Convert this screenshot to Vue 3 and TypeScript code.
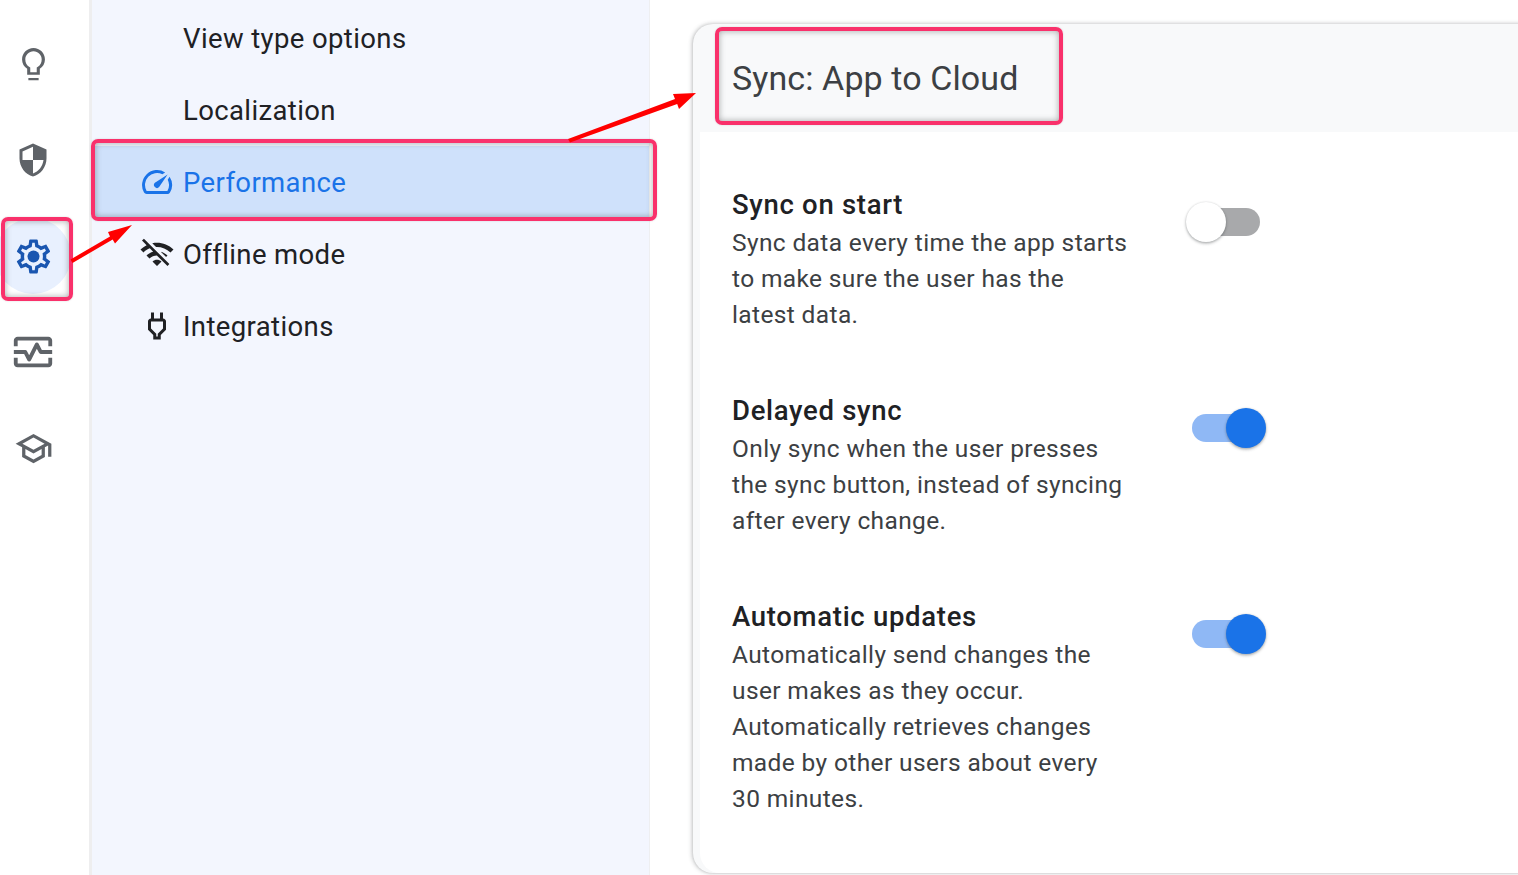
<script setup lang="ts">
interface NavItem { label: string; icon?: string; active?: boolean }
const nav: NavItem[] = [
  { label: 'View type options' },
  { label: 'Localization' },
  { label: 'Performance', active: true, icon: 'M20.38 8.57l-1.23 1.85a8 8 0 0 1-.22 7.58H5.07A8 8 0 0 1 15.58 6.85l1.85-1.23A10 10 0 0 0 3.35 19a2 2 0 0 0 1.72 1h13.85a2 2 0 0 0 1.74-1 10 10 0 0 0-.27-10.44z M10.59 15.41a2 2 0 0 0 2.83 0l5.66-8.49-8.49 5.66a2 2 0 0 0 0 2.83z' },
  { label: 'Offline mode', icon: 'M22.99 9C19.15 5.16 13.8 3.76 8.84 4.78l2.52 2.52c3.47-.17 6.99 1.05 9.63 3.7l2-2zm-4 4c-1.29-1.29-2.84-2.13-4.49-2.56l3.53 3.53.96-.97zM2 3.05L5.07 6.1C3.6 6.82 2.22 7.78 1 9l1.99 2c1.24-1.24 2.67-2.16 4.2-2.77l2.24 2.24C7.81 10.89 6.27 11.73 5 13v.01L6.99 15c1.36-1.36 3.14-2.04 4.92-2.06L18.98 20l1.27-1.26L3.29 1.79 2 3.05zM9 17l3 3 3-3c-1.65-1.66-4.34-1.66-6 0z' },
  { label: 'Integrations', icon: 'M16 9v4.66l-3.5 3.51V19h-1v-1.83L8 13.65V9h8m0-6h-2v4h-4V3H8v4h-.01C6.9 7 6 7.9 6 8.99v5.49L9.5 18v3h5v-3l3.5-3.51V9c0-1.1-.9-2-2-2V3z' },
]
const settings = [
  { title: 'Sync on start', on: false, lines: ['Sync data every time the app starts', 'to make sure the user has the', 'latest data.'] },
  { title: 'Delayed sync', on: true, lines: ['Only sync when the user presses', 'the sync button, instead of syncing', 'after every change.'] },
  { title: 'Automatic updates', on: true, lines: ['Automatically send changes the', 'user makes as they occur.', 'Automatically retrieves changes', 'made by other users about every', '30 minutes.'] },
]
</script>

<template>
  <div class="page">
    <aside class="rail">
      <div class="rail-item">
        <svg class="ico" viewBox="0 0 24 24"><path d="M9 21.2h6v-1.3H9zM12 2.4C8.3 2.4 5.3 5.4 5.3 9c0 2.3 1.2 4.3 3 5.5V18h7.4v-3.5c1.8-1.2 3-3.2 3-5.5 0-3.6-3-6.6-6.7-6.6zm2.6 10.9l-.7.5v2.7h-3.8v-2.7l-.7-.5C8 12.400 7.200 10.800 7.200 9c0-2.600 2.100-4.800 4.800-4.800s4.800 2.200 4.800 4.800c0 1.800-.8 3.400-2.200 4.300z"/></svg>
      </div>
      <div class="rail-item">
        <svg class="ico shield" viewBox="0 0 24 24"><path d="M12 1L3 5v6c0 5.55 3.84 10.74 9 12 5.160-1.260 9-6.450 9-12V5l-9-4zm0 10.990h7c-.53 4.120-3.280 7.790-7 8.940V12H5V6.300l7-3.110v8.800z"/></svg>
      </div>
      <div class="rail-item current">
        <svg class="ico" viewBox="0 0 24 24"><path d="M19.430 12.980c.04-.32.07-.64.07-.98 0-.34-.03-.66-.07-.98l2.110-1.650c.19-.15.24-.42.12-.64l-2-3.460c-.09-.16-.26-.25-.44-.25-.06 0-.12.01-.17.03l-2.490 1c-.52-.4-1.080-.73-1.690-.98l-.38-2.650C14.460 2.180 14.250 2 14 2h-4c-.25 0-.46.18-.49.42l-.38 2.650c-.61.25-1.170.59-1.690.98l-2.490-1c-.06-.02-.12-.03-.18-.03-.17 0-.34.09-.43.25l-2 3.460c-.13.22-.07.49.12.64l2.110 1.650c-.04.32-.07.65-.07.98 0 .33.03.66.07.98l-2.110 1.650c-.19.15-.24.42-.12.64l2 3.460c.09.16.26.25.44.25.06 0 .12-.01.17-.03l2.490-1c.52.4 1.080.73 1.690.98l.38 2.650c.03.24.24.42.49.42h4c.25 0 .46-.18.49-.42l.38-2.650c.61-.25 1.170-.59 1.690-.98l2.490 1c.06.02.12.03.18.03.17 0 .34-.09.43-.25l2-3.460c.12-.22.07-.49-.12-.64l-2.110-1.650zm-1.980-1.710c.04.31.05.52.05.73 0 .21-.02.43-.05.73l-.14 1.130.89.7 1.080.84-.7 1.210-1.270-.51-1.040-.42-.9.68c-.43.32-.84.56-1.250.73l-1.060.43-.16 1.130-.2 1.350h-1.400l-.19-1.350-.16-1.130-1.060-.43c-.43-.18-.83-.41-1.230-.71l-.91-.7-1.060.43-1.270.51-.7-1.210 1.080-.84.89-.7-.14-1.130c-.03-.31-.05-.54-.05-.74s.02-.43.05-.73l.14-1.130-.89-.7-1.080-.84.7-1.210 1.270.51 1.040.42.9-.68c.43-.32.84-.56 1.250-.73l1.060-.43.16-1.130.2-1.350h1.390l.19 1.350.16 1.130 1.060.43c.43.18.83.41 1.230.71l.91.7 1.060-.43 1.270-.51.7 1.210-1.070.85-.89.7.14 1.130z"/><circle cx="12" cy="12" r="3.500"/></svg>
      </div>
      <div class="rail-item">
        <svg class="ico wide" viewBox="0 0 24 24"><path d="M20 4H4c-1.100 0-2 .9-2 2v3h2V6h16v3h2V6c0-1.100-.9-2-2-2zM20 18H4v-3H2v3c0 1.100.9 2 2 2h16c1.100 0 2-.9 2-2v-3h-2v3zM14.890 7.550c-.34-.68-1.450-.68-1.790 0L10 13.760l-1.110-2.210C8.720 11.210 8.380 11 8 11H2v2h5.380l1.720 3.450c.18.34.52.55.9.55s.72-.21.89-.55L14 10.240l1.110 2.210c.17.34.51.55.89.55h6v-2h-5.380l-1.730-3.450z"/></svg>
      </div>
      <div class="rail-item">
        <svg class="ico school" viewBox="0 0 24 24"><path d="M12 3L1 9l4 2.180v6L12 21l7-3.820v-6l2-1.090V17h2V9L12 3zm6.820 6L12 12.720 5.180 9 12 5.280 18.820 9zM17 15.990l-5 2.730-5-2.730v-3.720L12 15l5-2.730v3.720z"/></svg>
      </div>
    </aside>

    <nav class="side">
      <div v-for="item in nav" :key="item.label" class="nav-item" :class="{ active: item.active }">
        <svg v-if="item.icon" class="nav-ico" viewBox="0 0 24 24"><path :d="item.icon"/></svg>
        <span v-else class="nav-ico"></span>
        <span>{{ item.label }}</span>
      </div>
    </nav>

    <main class="main">
      <section class="panel">
        <header class="head">Sync: App to Cloud</header>
        <div class="body">
          <div v-for="s in settings" :key="s.title" class="row">
            <div class="copy">
              <h3>{{ s.title }}</h3>
              <p v-for="l in s.lines" :key="l">{{ l }}</p>
            </div>
            <div class="switch" :class="{ on: s.on }">
              <span class="track"></span>
              <span class="thumb"></span>
            </div>
          </div>
        </div>
      </section>
    </main>

    <div class="mark m1"></div>
    <div class="mark m2"></div>
    <div class="mark m3"></div>
    <svg class="arrows" viewBox="0 0 1518 875" width="1518" height="875">
      <g fill="#ff0000" stroke="none">
        <path d="M70.500 259.500 L110 236.500 L108 232 L132 225 L115 243.500 L112.700 239.500 L72.500 263 Z"/>
        <path d="M568 139 L675 99 L673 94 L696 93 L679 109 L677.200 104 L570 142.500 Z"/>
      </g>
    </svg>
  </div>
</template>

<style>
html, body { margin: 0; padding: 0; background: #fff; }
</style>

<style scoped>
.page {
  position: relative;
  display: flex;
  width: 1518px;
  height: 875px;
  overflow: hidden;
  background: #fff;
  font-family: Roboto, "Liberation Sans", sans-serif;
}
.rail {
  box-sizing: border-box;
  flex: 0 0 89px;
  padding-top: 16px;
}
.rail-item {
  position: relative;
  width: 66px;
  height: 96px;
  display: flex;
  align-items: center;
  justify-content: center;
}
.rail-item.current::before {
  content: "";
  position: absolute;
  left: -5px;
  top: 10px;
  width: 76px;
  height: 76px;
  border-radius: 50%;
  background: #e8f0fe;
}
.ico {
  position: relative;
  width: 41px;
  height: 41px;
  fill: #5f6368;
}
.ico.wide { width: 46px; height: 46px; }
.ico.shield { width: 36px; height: 36px; }
.ico.school { width: 39px; height: 39px; margin-left: 1px; }
.current .ico { fill: #1a56b0; }
.side {
  box-sizing: border-box;
  flex: 0 0 561px;
  padding-top: 2px;
  background: #f3f6fe;
  border-left: 3px solid #eeeeef;
  border-right: 1px solid #eeeff1;
}
.nav-item {
  box-sizing: border-box;
  display: flex;
  align-items: center;
  gap: 8px;
  height: 72px;
  padding-left: 47px;
  font-size: 27.500px;
  letter-spacing: .38px;
  color: #202124;
}
.nav-item.active {
  background: #cfe1fb;
  color: #1a73e8;
}
.nav-ico {
  flex: 0 0 36px;
  width: 36px;
  height: 36px;
  fill: #202124;
}
.active .nav-ico { fill: #1a73e8; }
.main {
  flex: 1 1 auto;
  min-width: 0;
  padding: 24px 0 0 43px;
}
.panel {
  box-sizing: border-box;
  width: 840px;
  height: 849px;
  background: #f8f9fa;
  border-radius: 20px 0 0 20px;
  box-shadow: -1px 0 4px rgba(60, 64, 67, .3), 0 -1px 3px rgba(60, 64, 67, .06), 0 1px 2px rgba(60, 64, 67, .06);
}
.head {
  box-sizing: border-box;
  height: 108px;
  display: flex;
  align-items: center;
  padding-left: 39px;
  font-size: 34px;
  letter-spacing: .1px;
  color: #3c4043;
}
.body {
  box-sizing: border-box;
  height: 741px;
  margin-left: 7px;
  padding: 55px 0 0 32px;
  background: #fff;
  border-radius: 0 0 0 20px;
}
.row {
  display: flex;
  align-items: flex-start;
  margin-bottom: 60px;
}
.copy {
  flex: 0 0 454px;
  color: #3c4043;
  font-size: 24.500px;
  letter-spacing: .37px;
}
.copy h3 {
  margin: 0 0 2px;
  height: 36px;
  line-height: 36px;
  font-size: 27.500px;
  font-weight: 500;
  letter-spacing: .7px;
  color: #202124;
}
.copy p {
  margin: 0;
  height: 36px;
  line-height: 36px;
}
.switch {
  position: relative;
  flex: 0 0 80px;
  height: 40px;
  margin-top: 15px;
}
.track {
  position: absolute;
  left: 6px;
  right: 6px;
  top: 6px;
  height: 28px;
  border-radius: 14px;
  background: #a8a9ab;
}
.thumb {
  position: absolute;
  left: 0;
  top: 0;
  width: 40px;
  height: 40px;
  border-radius: 50%;
  background: #fff;
  box-shadow: 0 1.500px 3px rgba(60, 64, 67, .4), 0 0 2px rgba(60, 64, 67, .15);
}
.on .track { background: #8fb8f5; }
.on .thumb { left: 40px; background: #1a73e8; }
.mark {
  position: absolute;
  box-sizing: border-box;
  border: 4px solid #f9316b;
  border-radius: 7px;
  box-shadow: inset 0 0 6px rgba(60, 64, 67, .45), 0 0 2px rgba(60, 64, 67, .2);
}
.m1 { left: 91px; top: 139px; width: 566px; height: 82px; }
.m2 { left: 1px; top: 217px; width: 72px; height: 84px; }
.m3 { left: 715px; top: 27px; width: 348px; height: 98px; }
.arrows { position: absolute; left: 0; top: 0; pointer-events: none; }
</style>
